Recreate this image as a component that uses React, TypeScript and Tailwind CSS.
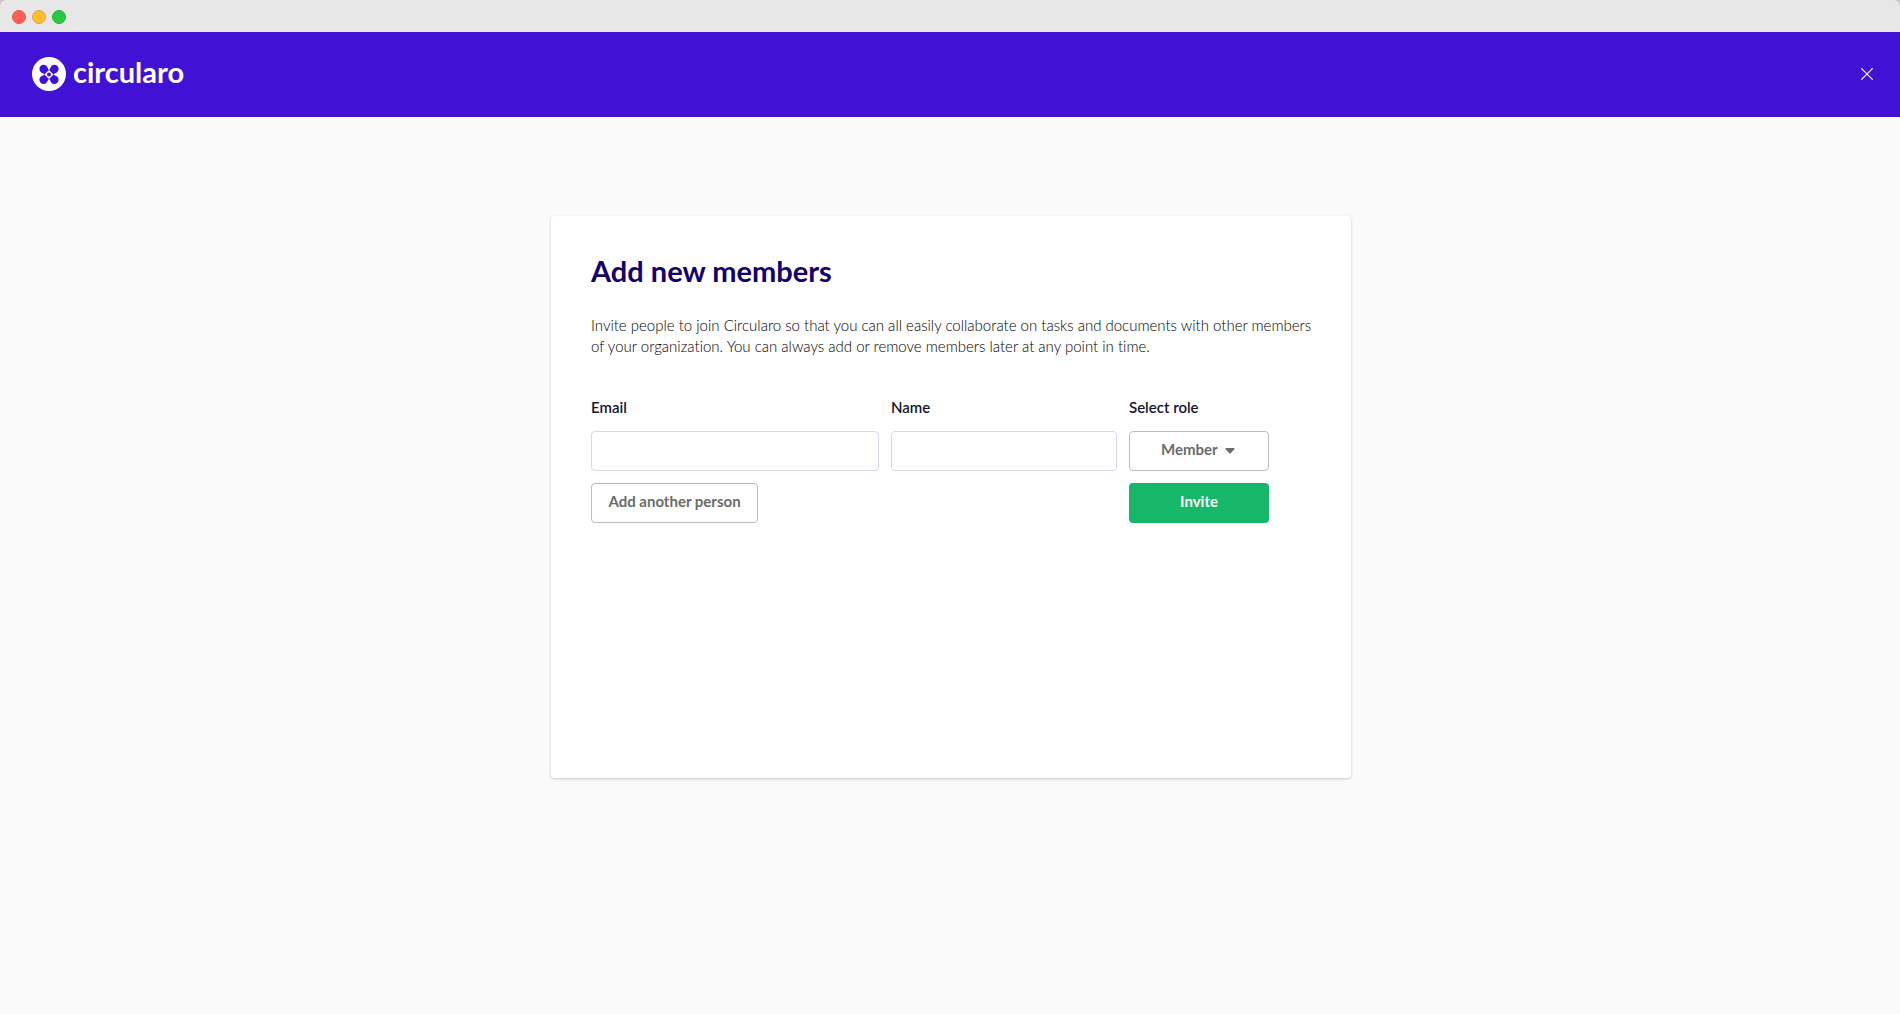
import { useState } from 'react'

type Person = {
  email: string
  name: string
  role: string
}

const ROLES = ['Member', 'Admin', 'Guest']

const emptyPerson: Person = { email: '', name: '', role: 'Member' }

function WindowBar() {
  return (
    <div className="bg-[#c4c4c4]">
      <div className="flex h-8 items-center gap-[6px] rounded-t-md bg-[#e7e7e7] pl-3 pt-[2px]">
        <span className="size-[14px] rounded-full border border-[#e8544d] bg-[#ff5f57]" />
        <span className="size-[14px] rounded-full border border-[#dfa336] bg-[#ffbd2e]" />
        <span className="size-[14px] rounded-full border border-[#1fb236] bg-[#28ca42]" />
      </div>
    </div>
  )
}

function Logo() {
  return (
    <a href="#" className="flex items-center gap-[7px] text-white">
      <svg className="size-[34px]" viewBox="0 0 34 34" aria-hidden="true">
        <circle cx="17" cy="17" r="17" fill="#fff" />
        <g fill="#4211d6">
          <circle cx="11.6" cy="12" r="4.2" />
          <circle cx="22.4" cy="12" r="4.2" />
          <circle cx="11.6" cy="22.8" r="4.2" />
          <circle cx="22.4" cy="22.8" r="4.2" />
          <path d="M14.6 10.4 L17 12.9 L19.4 10.4 L24 15 L21.5 17.4 L24 19.8 L19.4 24.4 L17 21.9 L14.6 24.4 L10 19.8 L12.5 17.4 L10 15Z" />
        </g>
        <path d="M17 12.9 L21.5 17.4 L17 21.9 L12.5 17.4Z" fill="#fff" />
        <circle cx="17" cy="17.4" r="2" fill="#4211d6" />
      </svg>
      <span className="pb-1 text-[29px] font-bold leading-8">circularo</span>
    </a>
  )
}

function Header() {
  return (
    <header className="flex h-[85px] items-center justify-between bg-[#4211d6] pb-px pl-8 pr-[27px]">
      <Logo />
      <button type="button" aria-label="Close" className="text-white">
        <svg className="size-3" viewBox="0 0 12 12" fill="none" stroke="currentColor" strokeWidth="1.1" aria-hidden="true">
          <path d="M0.3 0.3 L11.7 11.7 M11.7 0.3 L0.3 11.7" />
        </svg>
      </button>
    </header>
  )
}

type PersonRowProps = {
  person: Person
  index: number
  onChange: (index: number, patch: Partial<Person>) => void
}

function PersonRow({ person, index, onChange }: PersonRowProps) {
  const inputClass = 'h-10 w-full rounded border border-[#d9d6e9] bg-white px-3 outline-none focus:border-[#4211d6]'

  return (
    <>
      <input
        id={`email-${index}`}
        aria-label="Email"
        type="email"
        value={person.email}
        onChange={(e) => onChange(index, { email: e.target.value })}
        className={inputClass}
      />
      <input
        id={`name-${index}`}
        aria-label="Name"
        type="text"
        value={person.name}
        onChange={(e) => onChange(index, { name: e.target.value })}
        className={inputClass}
      />
      <div className="relative">
        <select
          id={`role-${index}`}
          aria-label="Select role"
          value={person.role}
          onChange={(e) => onChange(index, { role: e.target.value })}
          className="h-10 w-full appearance-none rounded border border-[#bdbdbd] bg-white pb-1 pl-[31px] font-bold text-[#6b6b6b]"
        >
          {ROLES.map((role) => (
            <option key={role}>{role}</option>
          ))}
        </select>
        <svg
          className="pointer-events-none absolute right-[34px] top-[17px] h-[6px] w-[10px]"
          viewBox="0 0 10 6"
          fill="#6b6b6b"
          aria-hidden="true"
        >
          <path d="M1 0 H9 Q10 0.3 9.3 1.2 L5.7 5.3 Q5 6 4.3 5.3 L0.7 1.2 Q0 0.3 1 0Z" />
        </svg>
      </div>
    </>
  )
}

export default function App() {
  const [people, setPeople] = useState<Person[]>([emptyPerson])

  const updatePerson = (index: number, patch: Partial<Person>) => {
    setPeople((prev) => prev.map((p, i) => (i === index ? { ...p, ...patch } : p)))
  }

  return (
    <div className="min-h-screen bg-[#fafafa] font-['Lato','Open_Sans',sans-serif] text-[15px] text-[#14142b] [font-variant-ligatures:none]">
      <WindowBar />
      <Header />
      <main className="pl-[18px] pr-4 pt-[99px]">
        <section className="mx-auto min-h-[562px] max-w-[800px] rounded bg-white pl-10 pr-8 pt-[35px] shadow-[0_1px_3px_rgba(0,0,0,0.2)]">
          <h1 className="text-[29px] font-bold leading-10 text-[#12006b]">Add new members</h1>
          <p className="mt-6 font-light leading-[21px] text-black">
            Invite people to join Circularo so that you can all easily collaborate on tasks and documents with other
            members of your organization. You can always add or remove members later at any point in time.
          </p>

          <form
            onSubmit={(e) => e.preventDefault()}
            className="mt-10 grid grid-cols-[288px_226px_140px] gap-3"
          >
            <label htmlFor="email-0" className="pb-[2px] font-semibold leading-5">
              Email
            </label>
            <label htmlFor="name-0" className="pb-[2px] font-semibold leading-5">
              Name
            </label>
            <label htmlFor="role-0" className="pb-[2px] font-semibold leading-5">
              Select role
            </label>

            {people.map((person, i) => (
              <PersonRow key={i} person={person} index={i} onChange={updatePerson} />
            ))}

            <div className="col-span-2">
              <button
                type="button"
                onClick={() => setPeople([...people, emptyPerson])}
                className="h-10 w-[167px] rounded border border-[#bdbdbd] bg-white pb-1 font-bold text-[#6b6b6b]"
              >
                Add another person
              </button>
            </div>
            <button type="submit" className="h-10 rounded bg-[#16b768] pb-1 font-bold text-white">
              Invite
            </button>
          </form>
        </section>
      </main>
    </div>
  )
}
